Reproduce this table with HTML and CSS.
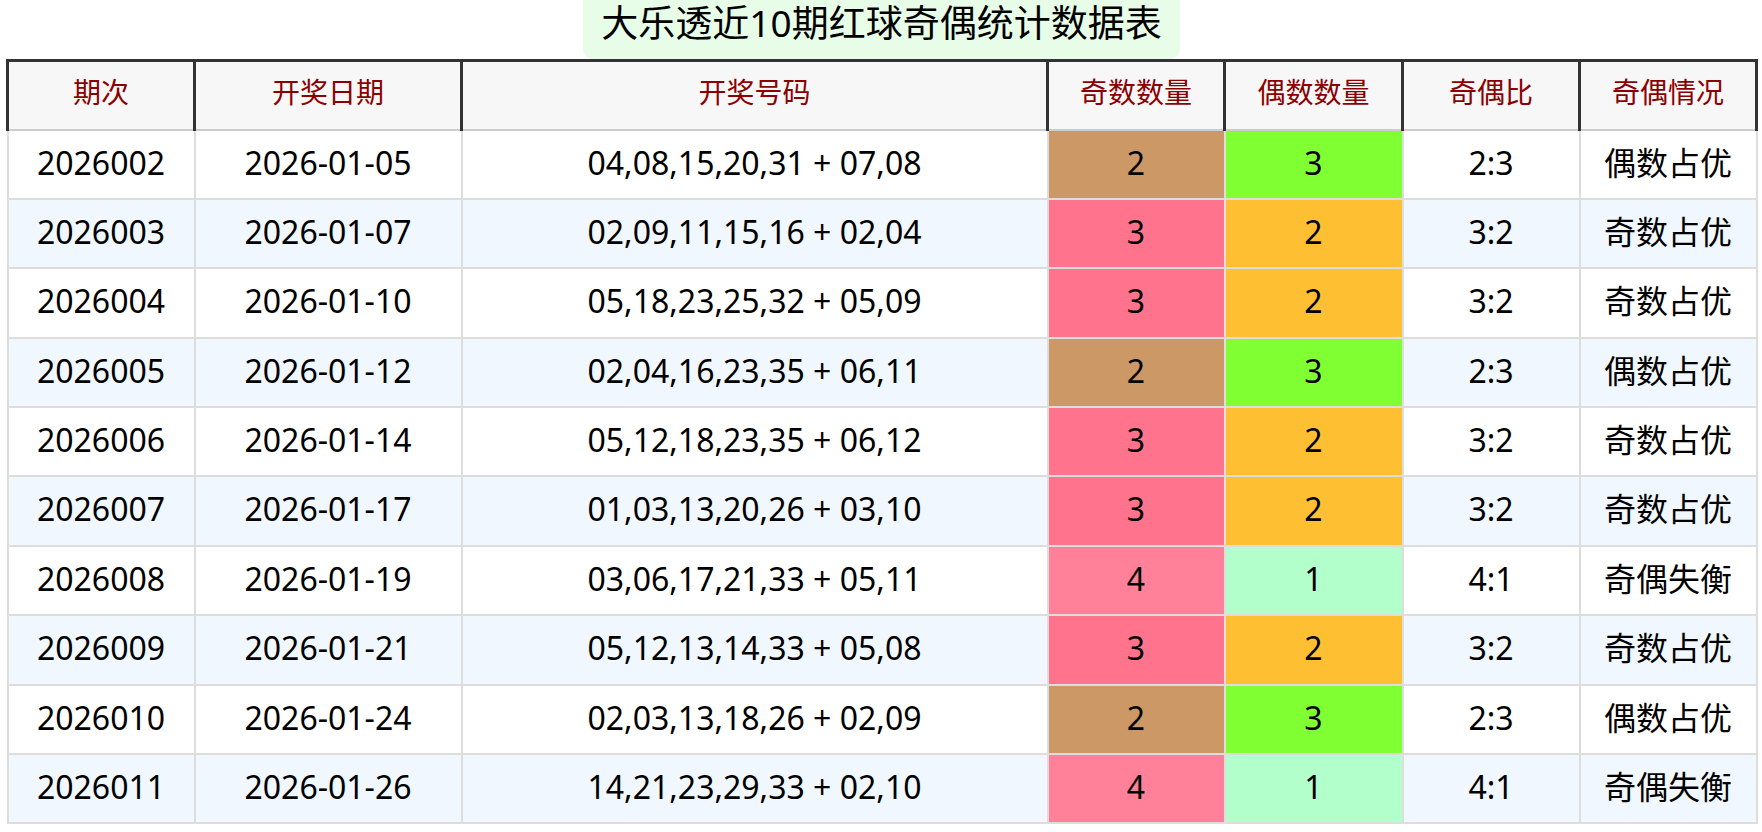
FILE: index.html
```html
<!DOCTYPE html>
<html lang="zh-CN">
<head>
<meta charset="utf-8">
<title>大乐透近10期红球奇偶统计数据表</title>
<link rel="stylesheet" href="styles.css">
</head>
<body>
<div class="page">
  <div class="title-wrap"><h1 class="title">大乐透近10期红球奇偶统计数据表</h1></div>
  <table class="grid">
    <colgroup>
      <col class="c-issue"><col class="c-date"><col class="c-nums"><col class="c-odd"><col class="c-even"><col class="c-ratio"><col class="c-state">
    </colgroup>
    <thead>
      <tr><th>期次</th><th>开奖日期</th><th>开奖号码</th><th>奇数数量</th><th>偶数数量</th><th>奇偶比</th><th>奇偶情况</th></tr>
    </thead>
    <tbody>
      <tr><td>2026002</td><td>2026-01-05</td><td>04,08,15,20,31 + 07,08</td><td class="odd2">2</td><td class="even3">3</td><td>2:3</td><td>偶数占优</td></tr>
      <tr><td>2026003</td><td>2026-01-07</td><td>02,09,11,15,16 + 02,04</td><td class="odd3">3</td><td class="even2">2</td><td>3:2</td><td>奇数占优</td></tr>
      <tr><td>2026004</td><td>2026-01-10</td><td>05,18,23,25,32 + 05,09</td><td class="odd3">3</td><td class="even2">2</td><td>3:2</td><td>奇数占优</td></tr>
      <tr><td>2026005</td><td>2026-01-12</td><td>02,04,16,23,35 + 06,11</td><td class="odd2">2</td><td class="even3">3</td><td>2:3</td><td>偶数占优</td></tr>
      <tr><td>2026006</td><td>2026-01-14</td><td>05,12,18,23,35 + 06,12</td><td class="odd3">3</td><td class="even2">2</td><td>3:2</td><td>奇数占优</td></tr>
      <tr><td>2026007</td><td>2026-01-17</td><td>01,03,13,20,26 + 03,10</td><td class="odd3">3</td><td class="even2">2</td><td>3:2</td><td>奇数占优</td></tr>
      <tr><td>2026008</td><td>2026-01-19</td><td>03,06,17,21,33 + 05,11</td><td class="odd4">4</td><td class="even1">1</td><td>4:1</td><td>奇偶失衡</td></tr>
      <tr><td>2026009</td><td>2026-01-21</td><td>05,12,13,14,33 + 05,08</td><td class="odd3">3</td><td class="even2">2</td><td>3:2</td><td>奇数占优</td></tr>
      <tr><td>2026010</td><td>2026-01-24</td><td>02,03,13,18,26 + 02,09</td><td class="odd2">2</td><td class="even3">3</td><td>2:3</td><td>偶数占优</td></tr>
      <tr><td>2026011</td><td>2026-01-26</td><td>14,21,23,29,33 + 02,10</td><td class="odd4">4</td><td class="even1">1</td><td>4:1</td><td>奇偶失衡</td></tr>
    </tbody>
  </table>
</div>
</body>
</html>
```
FILE: styles.css
```css
html, body {
  margin: 0;
  padding: 0;
  background: #ffffff;
}
body {
  font-family: "Noto Sans", "Noto Sans CJK SC", sans-serif;
  color: #000;
}
.page {
  padding: 0 5px 0 6px;
}
.title-wrap {
  display: flex;
  justify-content: center;
}
.title {
  margin: 0;
  padding: 1px 18px 15px;
  font-size: 37px;
  font-weight: normal;
  line-height: 43px;
  background: #e8fde8;
  border-radius: 0 0 10px 10px;
  color: #000;
}
.grid {
  width: 100%;
  border-collapse: collapse;
  table-layout: fixed;
}
.c-issue { width: 187px; }
.c-date { width: 267px; }
.c-nums { width: 586px; }
.c-odd { width: 177px; }
.c-even { width: 178px; }
.c-ratio { width: 177px; }
.c-state { width: 177px; }
.grid thead tr {
  height: 69px;
}
.grid th {
  background: #f7f7f7;
  color: #8b0000;
  font-weight: normal;
  font-size: 28px;
  line-height: 1.2;
  border: 3px solid #333;
  border-bottom: 2px solid #cccccc;
  padding: 0 0 4px;
  text-align: center;
}
.grid tbody tr {
  height: 69.4px;
}
.grid tbody tr:nth-child(even) td {
  background: #f0f7fe;
}
.grid td {
  border: 2px solid #dddddd;
  font-size: 32px;
  line-height: 1.2;
  text-align: center;
  padding: 0 0 3px;
}
.grid tbody tr td.odd2 { background: #cc9966; }
.grid tbody tr td.odd3 { background: #ff738c; }
.grid tbody tr td.odd4 { background: #ff8199; }
.grid tbody tr td.even3 { background: #80ff33; }
.grid tbody tr td.even2 { background: #ffbf33; }
.grid tbody tr td.even1 { background: #b3ffcc; }
```
